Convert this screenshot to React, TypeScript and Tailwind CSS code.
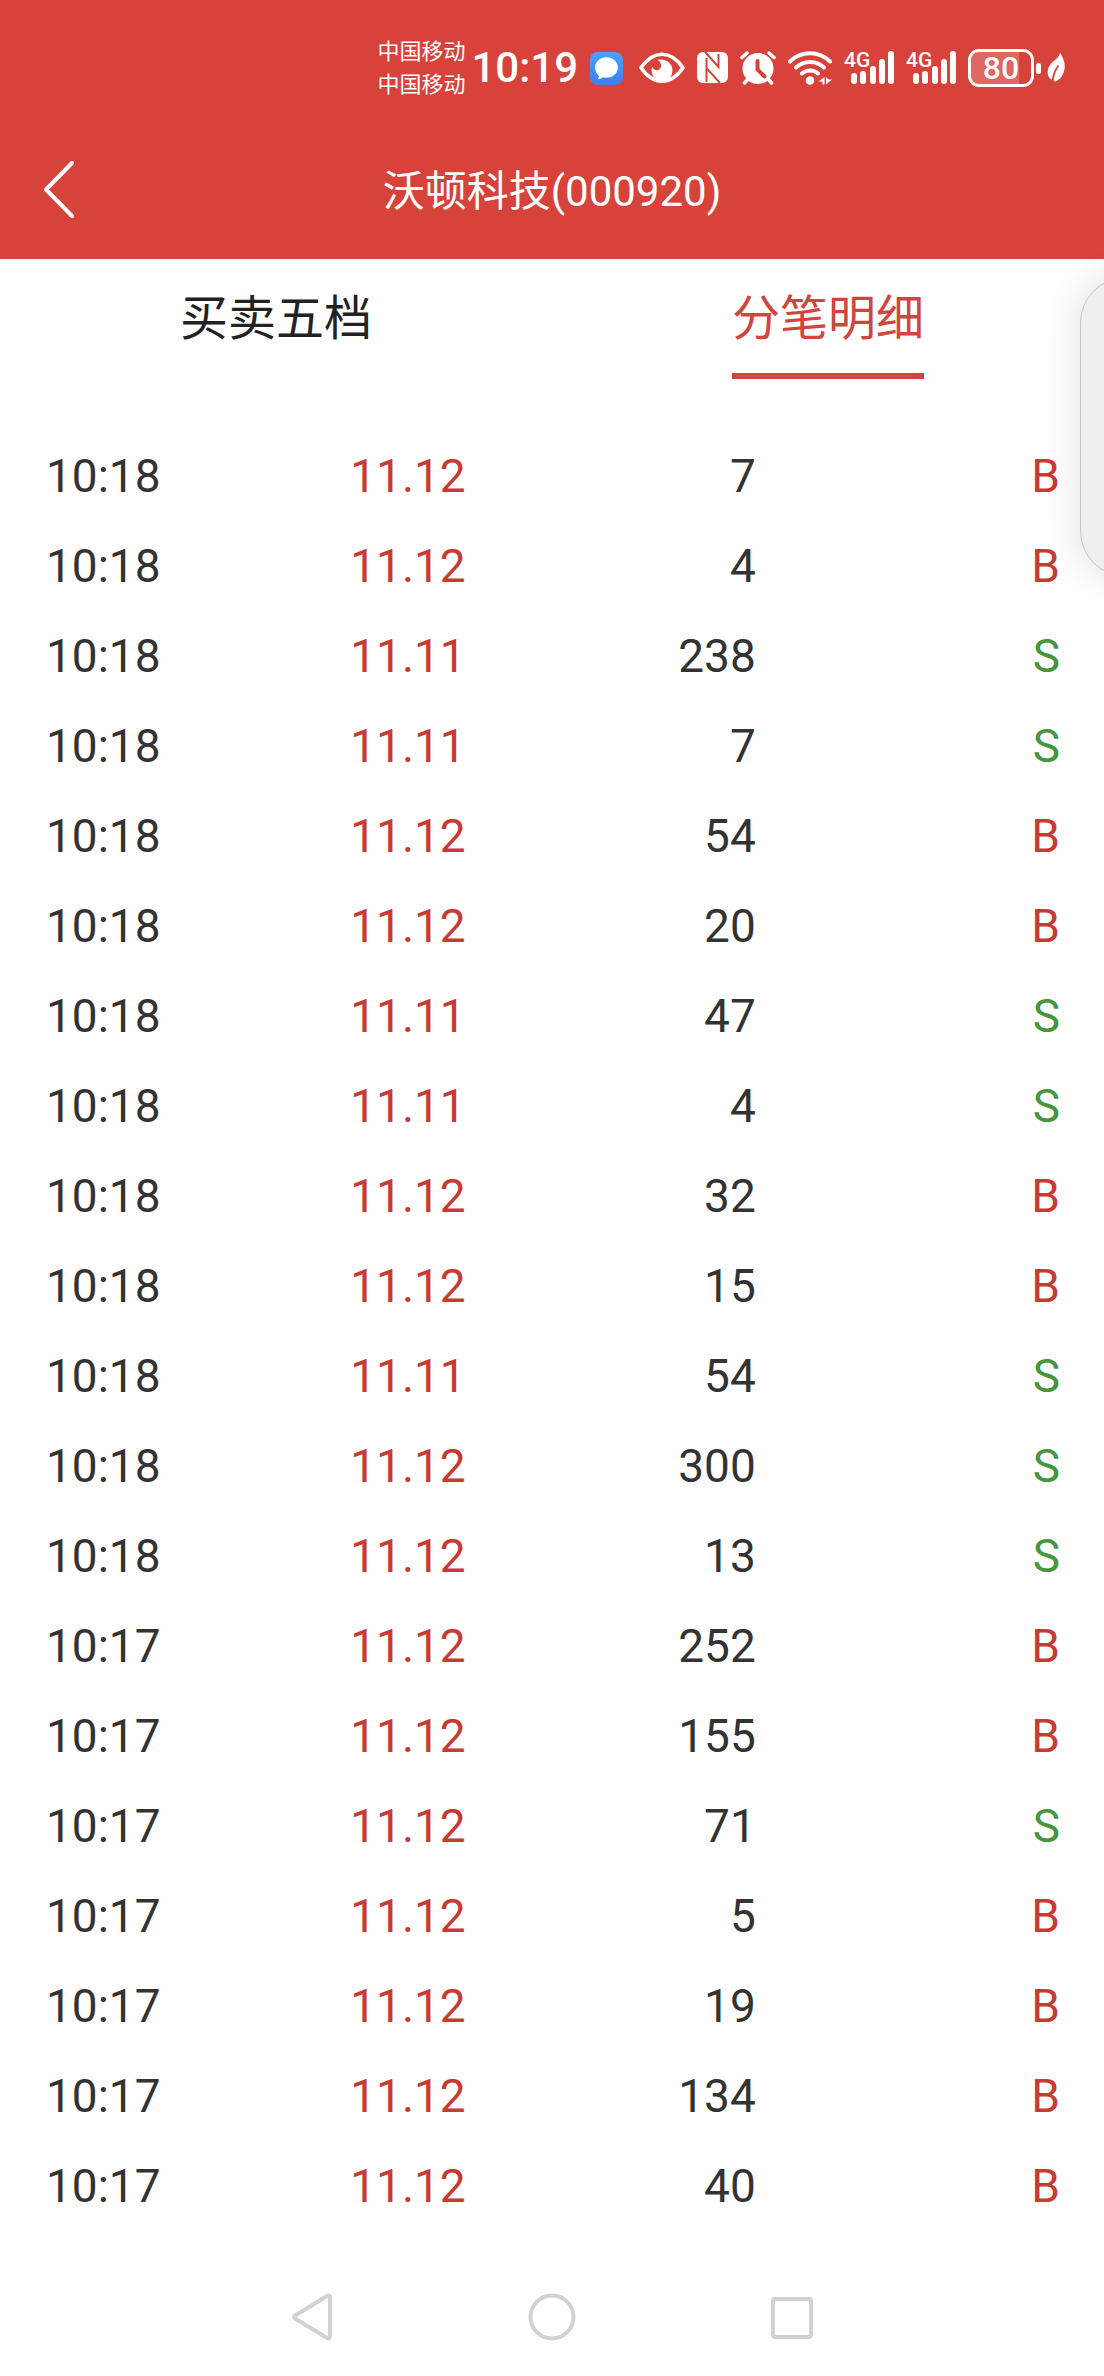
import React from "react";

type Side = "B" | "S";
type Trade = [time: string, price: string, volume: number, side: Side];

const trades: Trade[] = [
  ["10:18", "11.12", 7, "B"],
  ["10:18", "11.12", 4, "B"],
  ["10:18", "11.11", 238, "S"],
  ["10:18", "11.11", 7, "S"],
  ["10:18", "11.12", 54, "B"],
  ["10:18", "11.12", 20, "B"],
  ["10:18", "11.11", 47, "S"],
  ["10:18", "11.11", 4, "S"],
  ["10:18", "11.12", 32, "B"],
  ["10:18", "11.12", 15, "B"],
  ["10:18", "11.11", 54, "S"],
  ["10:18", "11.12", 300, "S"],
  ["10:18", "11.12", 13, "S"],
  ["10:17", "11.12", 252, "B"],
  ["10:17", "11.12", 155, "B"],
  ["10:17", "11.12", 71, "S"],
  ["10:17", "11.12", 5, "B"],
  ["10:17", "11.12", 19, "B"],
  ["10:17", "11.12", 134, "B"],
  ["10:17", "11.12", 40, "B"],
  ["10:17", "11.12", 7, "B"],
];

function MessageIcon() {
  return (
    <svg width="33" height="36" viewBox="0 0 33 36" className="mr-1">
      <defs>
        <linearGradient id="msg" x1="0" y1="0" x2="0" y2="1">
          <stop offset="0" stopColor="#4aa3fb" />
          <stop offset="1" stopColor="#3b7ff6" />
        </linearGradient>
      </defs>
      <rect x="0" y="2" width="33" height="33" rx="8" fill="url(#msg)" />
      <path d="M16.5 7.300c6.400 0 11.400 4.400 11.400 10.200s-5 10.200-11.400 10.200c-1.500 0-2.600-.2-3.800-.5-1.200 1.200-2.800 2-4.900 2 .8-1 1.200-2.200 1.100-3.400-2.400-2-3.800-4.900-3.800-8.300 0-5.800 5-10.200 11.400-10.200z" fill="#fff" />
    </svg>
  );
}

function EyeIcon() {
  return (
    <svg width="46" height="36" viewBox="0 0 46 36">
      <path d="M2 17.700C8 9 15 4.200 23 4.200S38 9 44 17.700C38 26.500 31 31.200 23 31.200S8 26.500 2 17.700Z" fill="none" stroke="#fff" strokeWidth="3.600" strokeLinejoin="round" />
      <path d="M18.500 9.800C27 8.500 33.500 13.500 33.500 20.500a10.500 10.500 0 0 1-21 0c0-1.500.3-2.700.8-3.800 1 3 4 4.300 6.500 3 3.200-1.600 3.500-6.300-1.300-9.900z" fill="#fff" />
    </svg>
  );
}

function NfcIcon() {
  return (
    <svg width="31" height="36" viewBox="0 0 31 36">
      <rect y="2" width="31" height="31" rx="6" fill="#fff" />
      <path d="M8 2 21.500 17V4M23 33 9.500 18v14M9.500 18V8" fill="none" stroke="#d7433b" strokeWidth="2" />
    </svg>
  );
}

function AlarmIcon() {
  return (
    <svg width="36" height="36" viewBox="0 0 36 36" fill="none" stroke="#fff" strokeLinecap="round">
      <circle cx="18" cy="18.500" r="15.500" fill="#fff" stroke="none" />
      <path d="M2 7.500 7 3M34 7.500 29 3M8 29l-3.500 4M28 29l3.500 4" strokeWidth="3.500" />
      <path d="M17.500 11v8.500l7 7" stroke="#d7433b" strokeWidth="4" />
    </svg>
  );
}

function WifiIcon() {
  return (
    <svg width="44" height="36" viewBox="0 0 44 36" fill="none" stroke="#fff" strokeWidth="4" strokeLinecap="round">
      <path d="M2 11.500C13 .5 31 .5 42 11.500M8 17.500c8-7.500 20-7.500 28 0M14 23.500c4.500-4 11.500-4 16 0" />
      <circle cx="22" cy="30.500" r="4.300" fill="#fff" stroke="none" />
      <path d="M30.500 31.500 36.500 27v7.500h-2v-3zM38 27v7.500l6-5h-3.500z" fill="#fff" stroke="none" />
    </svg>
  );
}

const signalBars = [
  { x: 7, y: 23 },
  { x: 16, y: 21 },
  { x: 26, y: 16 },
  { x: 35, y: 9 },
  { x: 44, y: 1 },
];

function SignalIcon() {
  return (
    <svg width="50" height="36" viewBox="0 0 50 36" fill="#fff" className="overflow-visible">
      <text x="0" y="17" fontSize="21" fontWeight="500" fontFamily="Roboto, sans-serif">4G</text>
      {signalBars.map((b) => (
        <rect key={b.x} x={b.x} y={b.y} width="6" height={34 - b.y} rx="3" />
      ))}
    </svg>
  );
}

function Battery() {
  return (
    <div className="flex items-center gap-0.5">
      <div className="relative flex h-[38px] w-[66px] items-center justify-center overflow-hidden rounded-[11px] border-3 border-white">
        <div className="absolute inset-y-0 left-0 w-4/5 bg-white/20" />
        <span className="relative text-[32px] leading-none font-medium">80</span>
      </div>
      <div className="h-[11px] w-[5px] rounded-full bg-white" />
    </div>
  );
}

function LeafIcon() {
  return (
    <svg width="18" height="36" viewBox="0 0 18 36" className="-ml-1.5">
      <path d="M13 2.700C16.500 8 18.500 13.500 17.500 19 16.300 25.500 13 29.500 8.500 31.500 7 31 2 29 1 25-.5 18 4 13 8 10c2.500-2 4.300-4 5-7.300z" fill="#fff" />
      <path d="M5.500 32C6 25.500 8 20 11.500 15.500" fill="none" stroke="#d7433b" strokeWidth="1.800" />
    </svg>
  );
}

function StatusBar() {
  return (
    <div className="flex h-[120px] items-center justify-end gap-3 pt-4 pr-[39px]">
      <div className="-mr-1.5 text-[22px] leading-[33px]">
        <div>中国移动</div>
        <div>中国移动</div>
      </div>
      <div className="text-[42px] leading-none font-medium">10:19</div>
      <MessageIcon />
      <EyeIcon />
      <NfcIcon />
      <AlarmIcon />
      <WifiIcon />
      <SignalIcon />
      <SignalIcon />
      <Battery />
      <LeafIcon />
    </div>
  );
}

export default function App() {
  return (
    <div className="relative flex h-screen flex-col overflow-hidden bg-[#fefefe] font-[Roboto,'Noto_Sans_CJK_SC',sans-serif] text-[#333]">
      <header className="shrink-0 bg-[#d7433b] text-white">
        <StatusBar />
        <div className="grid h-[139px] grid-cols-[1fr_auto_1fr] items-center">
          <button aria-label="返回" className="ml-[42px] w-fit">
            <svg width="34" height="58" viewBox="0 0 34 58" fill="none" stroke="#fff" strokeWidth="4" strokeLinecap="round" strokeLinejoin="round">
              <path d="M30 2 4 28.500 30 55" />
            </svg>
          </button>
          <h1 className="pt-1 text-[42px] leading-none">沃顿科技(000920)</h1>
        </div>
      </header>

      <nav className="grid shrink-0 grid-cols-2 justify-items-center text-[48px] leading-none">
        <button className="h-[120px] border-b-6 border-transparent pt-1.5 text-[#222]">买卖五档</button>
        <button className="h-[120px] border-b-6 border-[#d0453d] pt-1.5 text-[#d0453d]">分笔明细</button>
      </nav>

      <main className="min-h-0 flex-1 overflow-hidden pt-[52px] pr-11 pl-[46px]">
        <table className="w-full table-fixed text-[46px] leading-none">
          <colgroup>
            <col className="w-[30%]" />
            <col className="w-[40%]" />
            <col className="w-[30%]" />
          </colgroup>
          <tbody>
            {trades.map(([time, price, volume, side], i) => (
              <tr key={i} className="h-[90px]">
                <td>{time}</td>
                <td className="text-[#c83a32]">
                  <div className="flex justify-between">
                    <span>{price}</span>
                    <span className="text-[#333]">{volume}</span>
                  </div>
                </td>
                <td className={side === "B" ? "text-right text-[#c83a32]" : "text-right text-[#46963c]"}>{side}</td>
              </tr>
            ))}
          </tbody>
        </table>
      </main>

      <footer className="flex h-[118px] shrink-0 justify-center">
        <button aria-label="后退" className="flex w-[240px] items-center justify-center">
          <svg width="42" height="48" viewBox="0 0 42 48" fill="none" stroke="#d2d2d2" strokeWidth="4" strokeLinejoin="round">
            <path d="M36.500 2.800 3.500 23c-.8.500-.8 1.700 0 2.200L36.500 45.300c.9.500 2.500.2 2.500-1.300V4c0-1.500-1.600-1.800-2.500-1.200z" />
          </svg>
        </button>
        <button aria-label="主页" className="flex w-[240px] items-center justify-center">
          <svg width="48" height="48" viewBox="0 0 48 48" fill="none" stroke="#d2d2d2" strokeWidth="4">
            <circle cx="24" cy="24" r="21.500" />
          </svg>
        </button>
        <button aria-label="最近任务" className="flex w-[240px] items-center justify-center">
          <svg width="42" height="44" viewBox="0 0 42 44" fill="none" stroke="#d2d2d2" strokeWidth="4">
            <rect x="2" y="4" width="38" height="38" rx="2" />
          </svg>
        </button>
      </footer>

      <div className="absolute top-[277px] -right-[96px] h-[300px] w-[120px] rounded-[46px] border border-[#c8c8c8] bg-[#efefef] shadow-[0_0_36px_rgba(0,0,0,0.12)]" />
    </div>
  );
}
